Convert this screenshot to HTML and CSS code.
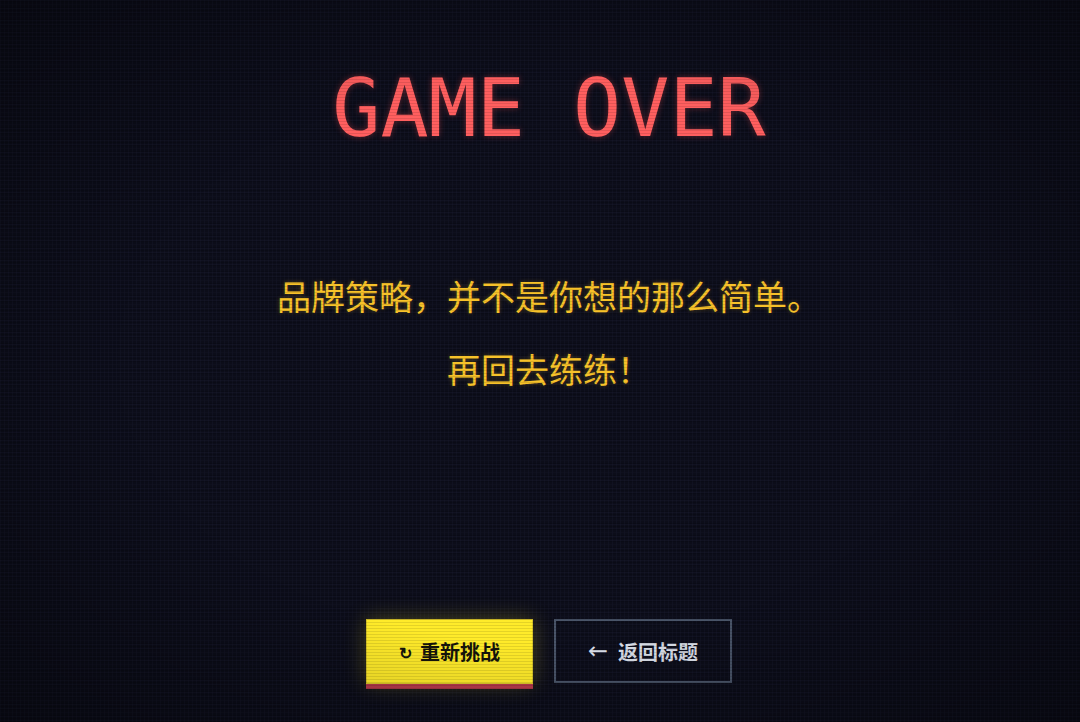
FILE: index.html
```html
<!DOCTYPE html>
<html lang="zh-CN">
<head>
    <meta charset="UTF-8">
    <meta name="viewport" content="width=device-width, initial-scale=1.0">
    <title>Game Over</title>
    <link rel="stylesheet" href="styles.css">
</head>
<body>
    <div class="screen">
        <h1 class="title">GAME OVER</h1>

        <div class="message">
            <p>品牌策略，并不是你想的那么简单。</p>
            <p>再回去练练！</p>
        </div>

        <div class="actions">
            <button class="btn btn-retry"><span class="btn-icon">↻</span>重新挑战</button>
            <button class="btn btn-back"><span class="btn-icon">←</span>返回标题</button>
        </div>
    </div>
</body>
</html>
```

FILE: styles.css
```css
html, body {
    margin: 0;
    height: 100%;
}
body {
    background-color: #0c0d19;
    background-image:
        linear-gradient(rgba(90, 100, 150, 0.06) 1px, transparent 1px),
        linear-gradient(90deg, rgba(90, 100, 150, 0.06) 1px, transparent 1px);
    background-size: 4px 4px;
    font-family: "Noto Sans CJK SC", sans-serif;
    overflow: hidden;
}
/* crt scanlines + dark corners */
body::after {
    content: "";
    position: fixed;
    inset: 0;
    pointer-events: none;
    background:
        repeating-linear-gradient(0deg, rgba(0, 0, 0, 0.1) 0 1px, transparent 1px 3px),
        radial-gradient(ellipse at center, transparent 55%, rgba(0, 0, 0, 0.35) 100%);
}
.screen {
    display: flex;
    flex-direction: column;
    align-items: center;
    padding-top: 69px;
    padding-left: 18px;
}
.title {
    margin: 0;
    font-family: "DejaVu Sans Mono", monospace;
    font-size: 80px;
    font-weight: normal;
    line-height: 1;
    color: #ff5f5f;
    text-shadow: 0 0 6px rgba(255, 80, 80, 0.35);
}
.message {
    margin-top: 110px;
    text-align: center;
}
.message p {
    margin: 0;
    font-size: 34px;
    line-height: 73px;
    color: #f7c22a;
    text-shadow: 0 0 4px rgba(247, 194, 42, 0.3);
}
.actions {
    display: flex;
    gap: 21px;
    margin-top: 214px;
}
.btn {
    height: 64px;
    padding: 0 32px;
    font-family: "Noto Sans CJK SC", sans-serif;
    font-size: 20px;
    font-weight: bold;
    cursor: pointer;
    display: flex;
    align-items: center;
}
.btn-icon {
    margin-right: 10px;
}
.btn-retry {
    height: 65px;
    background-color: #ffeb2a;
    color: #15140c;
    border: 1px solid #d8c52a;
    box-shadow: 0 5px 0 #b63a4c, 0 0 22px rgba(255, 235, 42, 0.25);
}
.btn-retry .btn-icon {
    font-size: 16px;
    margin-right: 8px;
}
.btn-back {
    background-color: transparent;
    color: #d9dee8;
    border: 2px solid #4a5569;
}
.btn-back .btn-icon {
    font-family: "DejaVu Sans", sans-serif;
    font-weight: normal;
    font-size: 24px;
}
```
